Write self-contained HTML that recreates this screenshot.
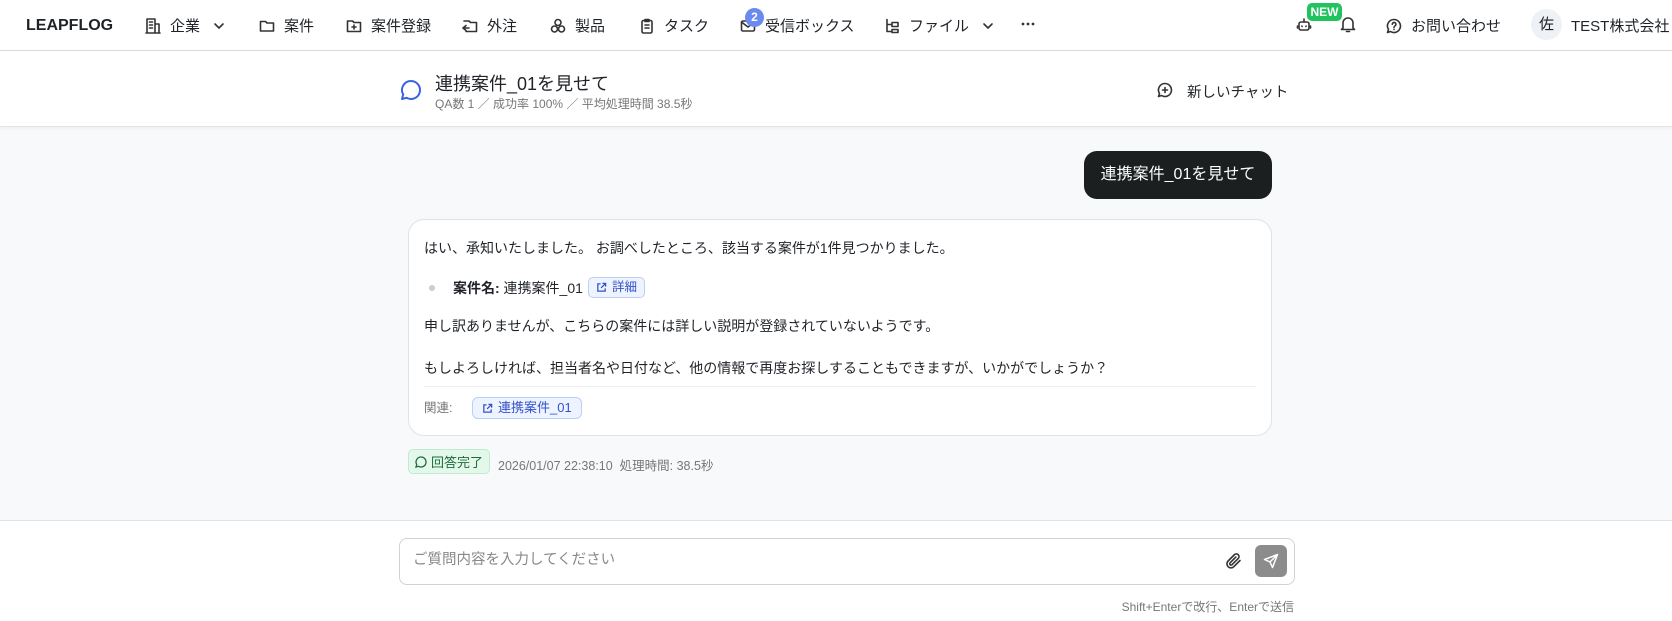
<!DOCTYPE html>
<html><head><meta charset="utf-8"><style>
*{box-sizing:border-box;margin:0;padding:0}
body{width:1672px;height:621px;overflow:hidden;background:#f8f9fa;font-family:"Liberation Sans","Noto Sans CJK JP",sans-serif;color:#1f2328;position:relative}
.a{position:absolute;white-space:nowrap}
svg{display:block}
.nav{position:absolute;left:0;top:0;width:1672px;height:51px;background:#fff;border-bottom:1px solid #d9dce0}
.ni{position:absolute;top:15px;font-size:15px;display:flex;align-items:center;gap:9px;color:#1f2328}
.ic{fill:none;stroke:#333;stroke-width:1.6;stroke-linecap:round;stroke-linejoin:round}
</style></head><body>
<div class="nav">
 <div class="a" style="left:26px;top:17px;font-size:16px;font-weight:bold;letter-spacing:0">LEAPFLOG</div>
 <div class="ni" style="left:145px"><svg class="ic" width="16" height="16" viewBox="0 0 16 16"><path d="M2 15V1h8v14M10 6h4v9M1 15h14M4.5 4h3M4.5 7h3M4.5 10h3"/></svg>企業 <svg class="ic" width="12" height="12" viewBox="0 0 12 12" style="margin-left:4px"><path d="M2 4l4 4 4-4"/></svg></div>
 <div class="ni" style="left:259px"><svg class="ic" width="16" height="16" viewBox="0 0 16 16"><path d="M1.5 3.5h5l1.5 1.5h6.5v8h-13z"/></svg>案件</div>
 <div class="ni" style="left:346px"><svg class="ic" width="16" height="16" viewBox="0 0 16 16"><path d="M1.5 3h5l1.5 1.5h6.5v9h-13zM8 7v4M6 9h4"/></svg>案件登録</div>
 <div class="ni" style="left:462px"><svg class="ic" width="16" height="16" viewBox="0 0 16 16"><path d="M2 3h5l1.5 1.5h6v9H4M1 10h6M4 7.5L1 10l3 2.5"/></svg>外注</div>
 <div class="ni" style="left:550px"><svg class="ic" width="16" height="16" viewBox="0 0 16 16"><circle cx="8" cy="4.5" r="3"/><circle cx="4.5" cy="11" r="3"/><circle cx="11.5" cy="11" r="3"/></svg>製品</div>
 <div class="ni" style="left:639px"><svg class="ic" width="16" height="16" viewBox="0 0 16 16"><rect x="3" y="2.5" width="10" height="12.5" rx="1.5"/><path d="M6 1.5h4v2H6zM6 7h4M6 10h4"/></svg>タスク</div>
 <div class="ni" style="left:740px"><svg class="ic" width="16" height="16" viewBox="0 0 16 16"><rect x="1.5" y="3" width="13" height="10" rx="1.5"/><path d="M1.5 4l6.5 5 6.5-5"/></svg>受信ボックス</div>
 <div class="a" style="left:745px;top:8px;width:19px;height:19px;border-radius:50%;background:#6b8af0;color:#fff;font-size:12px;font-weight:bold;text-align:center;line-height:19px">2</div>
 <div class="ni" style="left:884px"><svg class="ic" width="16" height="16" viewBox="0 0 16 16"><path d="M3 1.5v12h4M3 6.5h4M8 4.5h6v4H8zM8 11.5h6v3H8z"/></svg>ファイル <svg class="ic" width="12" height="12" viewBox="0 0 12 12" style="margin-left:4px"><path d="M2 4l4 4 4-4"/></svg></div>
 <svg class="a" style="left:1021px;top:22px" width="14" height="4" viewBox="0 0 14 4" fill="#333"><circle cx="2" cy="2" r="1.4"/><circle cx="7" cy="2" r="1.4"/><circle cx="12" cy="2" r="1.4"/></svg>
 <svg class="ic a" style="left:1296px;top:17px" width="16" height="16" viewBox="0 0 16 16"><rect x="3" y="5" width="10" height="8" rx="2"/><path d="M8 2v3M6 9v.5M10 9v.5M1.5 9v2M14.5 9v2"/></svg>
 <div class="a" style="left:1307px;top:3px;width:35px;height:18px;border-radius:5px;background:#22c35e;color:#fff;font-size:12px;font-weight:bold;text-align:center;line-height:18px">NEW</div>
 <svg class="ic a" style="left:1340px;top:16px" width="16" height="17" viewBox="0 0 16 17"><path d="M3 12V7a5 5 0 0110 0v5l1.5 1.5h-13zM6.5 15.5h3"/></svg>
 <div class="ni" style="left:1386px"><svg class="ic" width="16" height="16" viewBox="0 0 16 16"><path d="M8 1.5a6.5 6.5 0 11-3.5 12L1.5 14.5l1-3A6.5 6.5 0 018 1.5zM6.3 6.2a1.8 1.8 0 113 1.4c-.8.5-1.3.8-1.3 1.8M8 11.3v.2"/></svg>お問い合わせ</div>
 <div class="a" style="left:1531px;top:9px;width:31px;height:31px;border-radius:50%;background:#eef1f6;font-size:15px;text-align:center;line-height:31px">佐</div>
 <div class="a" style="left:1571px;top:15px;font-size:15px">TEST株式会社</div>
</div>
<div class="a" style="left:0;top:51px;width:1672px;height:76px;background:#fff;border-bottom:1px solid #e3e5e8;box-shadow:0 1px 3px rgba(0,0,0,.05)"></div>
<svg class="a" style="left:400px;top:79px" width="22" height="22" viewBox="0 0 22 22" fill="none" stroke="#3b63e0" stroke-width="2" stroke-linejoin="round"><path d="M11 2a9 9 0 11-4.5 16.8L2 20l1.2-4.5A9 9 0 0111 2z"/></svg>
<div class="a" style="left:435px;top:70px;font-size:18px;color:#1f2328">連携案件_01を見せて</div>
<div class="a" style="left:435px;top:95px;font-size:12px;color:#777">QA数 1 ／ 成功率 100% ／ 平均処理時間 38.5秒</div>
<svg class="ic a" style="left:1157px;top:82px" width="16" height="16" viewBox="0 0 16 16"><path d="M8 1.5a6.5 6.5 0 11-3.5 12L1.5 14.5l1-3A6.5 6.5 0 018 1.5zM8 5.5v5M5.5 8h5"/></svg>
<div class="a" style="left:1187px;top:81px;font-size:14.5px">新しいチャット</div>

<div class="a" style="left:1084px;top:151px;width:188px;height:48px;border-radius:13px;background:#1b1f1f;color:#fff;font-size:16px;text-align:center;line-height:48px">連携案件_01を見せて</div>

<div class="a" style="left:408px;top:219px;width:864px;height:217px;background:#fff;border:1px solid #dfe2e6;border-radius:16px"></div>
<div class="a" style="left:424px;top:238px;font-size:14px">はい、承知いたしました。 お調べしたところ、該当する案件が1件見つかりました。</div>
<div class="a" style="left:429px;top:285px;width:6px;height:6px;border-radius:50%;background:#ccc"></div>
<div class="a" style="left:453px;top:278px;font-size:14px"><b>案件名:</b> 連携案件_01</div>
<div class="a" style="left:588px;top:277px;height:21px;padding:0 7px;border:1px solid #bcd0f5;background:#eef4ff;border-radius:5px;color:#3552c9;font-size:12.5px;line-height:19px;display:flex;align-items:center;gap:5px"><svg width="11" height="11" viewBox="0 0 12 12" fill="none" stroke="#3552c9" stroke-width="1.4"><path d="M5 2H2v8h8V7M7 1.5h3.5V5M10.5 1.5L5.5 6.5"/></svg>詳細</div>
<div class="a" style="left:424px;top:316px;font-size:14px">申し訳ありませんが、こちらの案件には詳しい説明が登録されていないようです。</div>
<div class="a" style="left:424px;top:358px;font-size:14px">もしよろしければ、担当者名や日付など、他の情報で再度お探しすることもできますが、いかがでしょうか？</div>
<div class="a" style="left:424px;top:386px;width:832px;height:1px;background:#eceef0"></div>
<div class="a" style="left:424px;top:397px;font-size:12.5px;color:#777">関連:</div>
<div class="a" style="left:472px;top:397px;height:22px;padding:0 9px;border:1px solid #bcd0f5;background:#eef4ff;border-radius:6px;color:#3552c9;font-size:13px;line-height:20px;display:flex;align-items:center;gap:5px"><svg width="11" height="11" viewBox="0 0 12 12" fill="none" stroke="#3552c9" stroke-width="1.4"><path d="M5 2H2v8h8V7M7 1.5h3.5V5M10.5 1.5L5.5 6.5"/></svg>連携案件_01</div>

<div class="a" style="left:408px;top:449px;width:82px;height:25px;border:1px solid #bfeccd;background:#e3f8ea;border-radius:5px;color:#1d6b3a;font-size:13px;display:flex;align-items:center;justify-content:center;gap:4px"><svg width="12" height="12" viewBox="0 0 12 12" fill="none" stroke="#1d6b3a" stroke-width="1.3"><path d="M6 1a5 5 0 11-2.5 9.3L1 11l.7-2.5A5 5 0 016 1z"/></svg>回答完了</div>
<div class="a" style="left:498px;top:455px;font-size:12.5px;color:#777">2026/01/07 22:38:10 &nbsp;処理時間: 38.5秒</div>

<div class="a" style="left:0;top:520px;width:1672px;height:101px;background:#fff;border-top:1px solid #e0e3e6"></div>
<div class="a" style="left:399px;top:538px;width:896px;height:47px;border:1px solid #cfd3d8;border-radius:8px;background:#fff"></div>
<div class="a" style="left:413px;top:548px;font-size:14.5px;color:#888">ご質問内容を入力してください</div>
<svg class="ic a" style="left:1225px;top:552px" width="18" height="18" viewBox="0 0 18 18"><path d="M15 8.5l-6.2 6.2a4 4 0 01-5.7-5.7l6.5-6.5a2.7 2.7 0 013.8 3.8L7 12.7a1.3 1.3 0 01-1.9-1.9l5.7-5.7"/></svg>
<div class="a" style="left:1255px;top:545px;width:32px;height:32px;border-radius:6px;background:#8c8c8c"></div>
<svg class="a" style="left:1263px;top:553px" width="16" height="16" viewBox="0 0 16 16" fill="none" stroke="#fff" stroke-width="1.5" stroke-linejoin="round"><path d="M14.5 1.5L1.5 6.5l5.5 2.5 2.5 5.5zM14.5 1.5L7 9"/></svg>
<div class="a" style="right:378px;top:598px;font-size:12px;color:#777">Shift+Enterで改行、Enterで送信</div>
</body></html>
